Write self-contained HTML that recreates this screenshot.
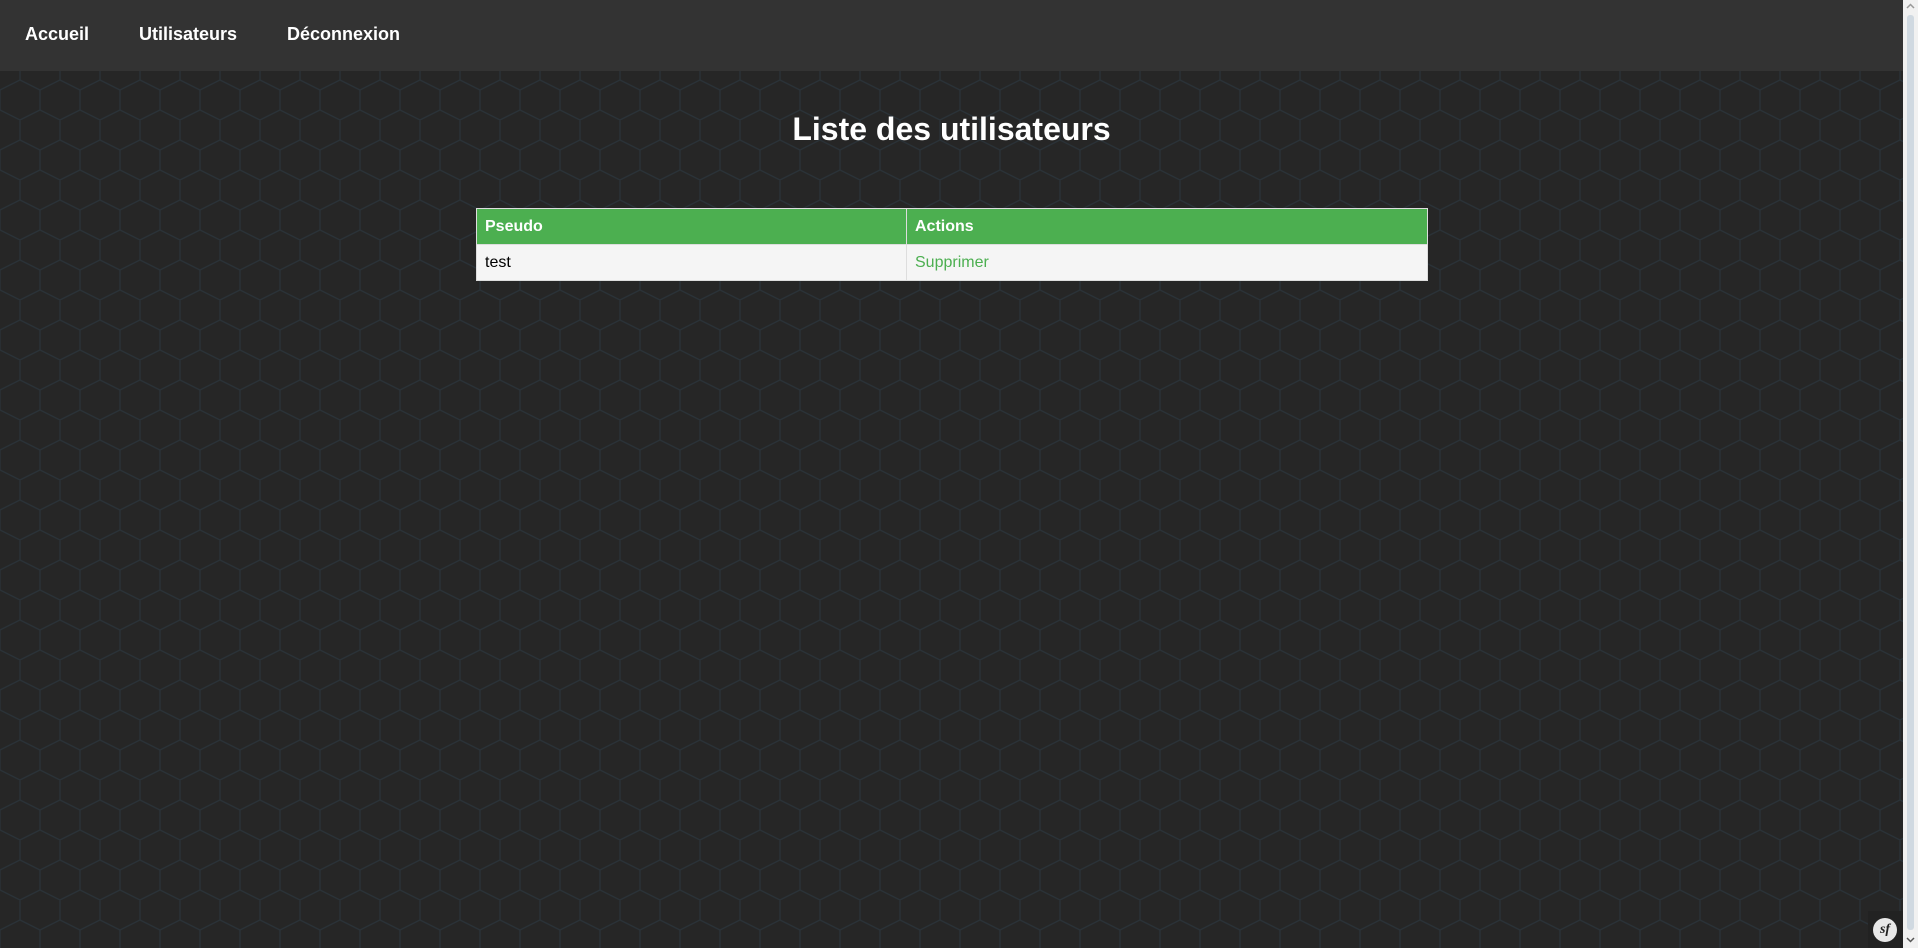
<!DOCTYPE html>
<html><head><meta charset="utf-8"><style>
html,body{margin:0;padding:0;}
body{width:1918px;height:948px;overflow:hidden;position:relative;font-family:"Liberation Sans",Arial,sans-serif;background-color:#262626;}
.bg{position:absolute;left:0;top:0;}
.page{position:absolute;left:0;top:0;width:1903px;height:948px;}
nav{position:absolute;left:0;top:0;width:1903px;height:71px;background:#333;}
nav a{position:absolute;top:24px;color:#fff;font-weight:bold;font-size:18px;text-decoration:none;}
h1{position:absolute;top:106px;left:0;width:1903px;text-align:center;margin:0;color:#fff;font-size:32px;font-weight:bold;line-height:46px;}
table{position:absolute;left:476px;top:208px;width:952px;border-collapse:collapse;font-size:16px;}
td,th{border:1px solid #ddd;padding:0 8px;height:35px;text-align:left;}
th{background:#4caf50;color:#fff;font-weight:bold;}
td{background:#f5f5f5;color:#000;}
td a{color:#4caf50;text-decoration:none;}
.sb{position:absolute;left:1903px;top:0;width:15px;height:948px;background:#f1f1f1;}
.thumb{position:absolute;left:4px;top:15px;width:7px;height:915px;background:#d0d9e1;border-radius:3px;}
.sf{position:absolute;left:1868px;top:911px;width:35px;height:37px;background:#222;}
.sf div{position:absolute;left:5px;top:7px;width:24px;height:24px;border-radius:50%;background:#e8e8e8;color:#222;font:italic bold 14px "Liberation Serif",serif;text-align:center;line-height:24px;}
</style></head><body>
<svg class="bg" width="1903" height="948"><defs><pattern id="h" width="40" height="60" patternUnits="userSpaceOnUse"><path d="M20 0V20L0 30V50L20 60M20 20L40 30V50L20 60" fill="none" stroke="#2a3238" stroke-width="1.3"/></pattern></defs><rect width="1903" height="948" fill="url(#h)"/></svg>
<div class="page">
<nav><a style="left:25px">Accueil</a><a style="left:139px">Utilisateurs</a><a style="left:287px">Déconnexion</a></nav>
<h1>Liste des utilisateurs</h1>
<table><tr><th style="width:413px">Pseudo</th><th>Actions</th></tr>
<tr><td>test</td><td><a href="#">Supprimer</a></td></tr></table>
<div class="sf"><div>sf</div></div>
</div>
<div class="sb"><div class="thumb"></div>
<svg style="position:absolute;left:3px;top:3px" width="9" height="6"><path d="M1 5L4.5 1.5L8 5" fill="none" stroke="#999" stroke-width="1.5"/></svg>
<svg style="position:absolute;left:3px;top:937px" width="9" height="6"><path d="M1 1L4.5 4.5L8 1" fill="none" stroke="#555" stroke-width="1.5"/></svg>
</div>
</body></html>
